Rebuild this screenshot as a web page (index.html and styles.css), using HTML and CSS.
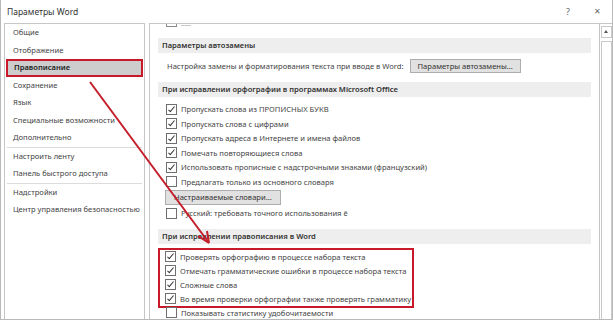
FILE: index.html
```html
<!DOCTYPE html>
<html lang="ru">
<head>
    <meta charset="UTF-8">
    <title>Параметры Word</title>
    <link rel="stylesheet" href="styles.css">
</head>
<body>
<div class="window">
    <div class="titlebar">
        <span class="title">Параметры Word</span>
        <span class="title-btns"><span class="help">?</span><span class="close">✕</span></span>
    </div>

    <div class="main">
        <!-- left menu -->
        <ul class="nav">
            <li>Общие</li>
            <li>Отображение</li>
            <li class="active">Правописание</li>
            <li>Сохранение</li>
            <li>Язык</li>
            <li>Специальные возможности</li>
            <li>Дополнительно</li>
            <li class="sep"></li>
            <li>Настроить ленту</li>
            <li>Панель быстрого доступа</li>
            <li class="sep"></li>
            <li>Надстройки</li>
            <li>Центр управления безопасностью</li>
        </ul>

        <!-- options pane -->
        <div class="pane">
            <div class="content">
                <!-- bottom edge of the option scrolled out of view -->
                <div class="partial"><span class="partial-box"></span><span class="partial-text"></span></div>

                <div class="section first">Параметры автозамены</div>
                <div class="row autocorrect">
                    <span>Настройка замены и форматирования текста при вводе в Word:</span>
                    <span class="btn">Параметры автозамены...</span>
                </div>

                <div class="section">При исправлении орфографии в программах Microsoft Office</div>
                <div class="checks">
                    <div class="row"><span class="box checked"></span><span>Пропускать слова из ПРОПИСНЫХ БУКВ</span></div>
                    <div class="row"><span class="box checked"></span><span>Пропускать слова с цифрами</span></div>
                    <div class="row"><span class="box checked"></span><span>Пропускать адреса в Интернете и имена файлов</span></div>
                    <div class="row"><span class="box checked"></span><span>Помечать повторяющиеся слова</span></div>
                    <div class="row"><span class="box checked"></span><span>Использовать прописные с надстрочными знаками (французский)</span></div>
                    <div class="row"><span class="box"></span><span>Предлагать только из основного словаря</span></div>
                    <div class="btn-row"><span class="btn">Настраиваемые словари...</span></div>
                    <div class="row"><span class="box"></span><span>Русский: требовать точного использования ё</span></div>
                </div>

                <div class="section">При исправлении правописания в Word</div>
                <div class="highlight">
                    <div class="row"><span class="box checked"></span><span>Проверять орфографию в процессе набора текста</span></div>
                    <div class="row"><span class="box checked"></span><span>Отмечать грамматические ошибки в процессе набора текста</span></div>
                    <div class="row"><span class="box checked"></span><span>Сложные слова</span></div>
                    <div class="row"><span class="box checked"></span><span>Во время проверки орфографии также проверять грамматику</span></div>
                </div>
                <div class="row last"><span class="box"></span><span>Показывать статистику удобочитаемости</span></div>
            </div>
            <div class="scrollbar">
                <div class="arrow-up"></div>
                <div class="thumb"></div>
            </div>
        </div>
    </div>

    <!-- red pointer over the dialog -->
    <svg class="pointer" width="613" height="320" viewBox="0 0 613 320">
        <line x1="89" y1="82" x2="208" y2="243" stroke="#c41e2a" stroke-width="2"/>
        <path d="M208 243 L197 236 M208 243 L206 231" stroke="#c41e2a" stroke-width="2" fill="none"/>
    </svg>
</div>
</body>
</html>
```

FILE: styles.css
```css
/* Page */
body {
    margin: 0;
    background: #fff;
    font-family: "Noto Sans", "Open Sans", sans-serif;
    font-size: 7.6px;
    color: #444;
}

/* Dialog window */
.window {
    position: relative;
    width: 613px;
    height: 320px;
    box-sizing: border-box;
    border: 1px solid #b9b9b9;
    border-top: none;
    background: #fff;
    overflow: hidden;
}

/* Title bar */
.titlebar {
    height: 23px;
    display: flex;
    align-items: center;
    justify-content: space-between;
    padding: 0 11px 0 6px;
}

.title {
    color: #333;
    font-size: 8.5px;
}

.title-btns {
    display: flex;
    gap: 24px;
    color: #666;
    font-size: 9px;
}

.close {
    font-size: 8px;
}

/* Main area */
.main {
    display: flex;
    gap: 4px;
    height: 296px;
    padding-left: 3px;
}

/* Left menu */
.nav {
    list-style: none;
    margin: 0;
    padding: 0;
    width: 141px;
    box-sizing: border-box;
    border: 1px solid #c6c6c6;
    border-bottom: none;
}

.nav li {
    height: 17.5px;
    line-height: 17.5px;
    padding-left: 8px;
    white-space: nowrap;
}

.nav li.sep {
    height: 1px;
    margin: 0 2px;
    background: #dcdcdc;
}

.nav li.active {
    margin: 0 1px;
    padding-left: 6px;
    height: 13.5px;
    line-height: 13.5px;
    background: #cdcdcd;
    border: 2px solid #c8192b;
    color: #222;
    font-weight: 600;
}

/* Options pane */
.pane {
    flex: 1;
    display: flex;
    border: 1px solid #c6c6c6;
    border-bottom: none;
    border-right: none;
    min-width: 0;
}

.content {
    flex: 1;
    padding: 0 8px 0 8px;
    border-right: 1px solid #c6c6c6;
    overflow: hidden;
}

/* Scrolled-off option */
.partial {
    display: flex;
    align-items: flex-start;
    gap: 4px;
    height: 3px;
    padding-left: 8px;
}

.partial-box {
    width: 9px;
    height: 2px;
    border: 1px solid #8a8a8a;
    border-top: none;
}

.partial-text {
    width: 10px;
    height: 1px;
    margin-top: 1px;
    background: #c8c8c8;
}

.row {
    display: flex;
    align-items: center;
    height: 14.5px;
    padding-left: 8px;
    gap: 4px;
    white-space: nowrap;
}

/* Checkbox */
.box {
    width: 9px;
    height: 9px;
    flex: none;
    border: 1px solid #6f6f6f;
    background: #fff;
    position: relative;
}

.box.checked::after {
    content: "";
    position: absolute;
    left: 3px;
    top: 0;
    width: 2px;
    height: 6px;
    border: solid #333;
    border-width: 0 1.5px 1.5px 0;
    transform: rotate(40deg);
}

/* Section headers */
.section {
    height: 15px;
    line-height: 15px;
    padding-left: 4px;
    margin-top: 8px;
    background: #eeeeee;
    color: #333;
    font-weight: 600;
    white-space: nowrap;
}

.section.first {
    margin-top: 11px;
}

.autocorrect {
    height: 17px;
    margin-top: 4px;
    gap: 6px;
    padding-left: 9px;
}

/* Buttons */
.btn {
    display: inline-block;
    height: 12px;
    line-height: 12px;
    padding: 0 7px;
    background: #e1e1e1;
    border: 1px solid #adadad;
    color: #333;
}

.checks {
    margin-top: 5px;
}

.btn-row {
    height: 17px;
    display: flex;
    align-items: center;
    padding-left: 7px;
}

.btn-row .btn {
    height: 13px;
    line-height: 13px;
    padding: 0 8px;
}

/* Highlighted group */
.highlight {
    margin-top: 4px;
    width: 252px;
    border: 2px solid #c8192b;
}

.highlight .row {
    height: 14px;
    padding-left: 5px;
}

.row.last {
    margin-top: -2px;
    height: 14px;
}

/* Scrollbar */
.scrollbar {
    width: 12px;
    display: flex;
    flex-direction: column;
    align-items: center;
    padding-top: 2px;
    gap: 3px;
}

.arrow-up {
    width: 9px;
    height: 10px;
    border: 1px solid #c9c9c9;
    position: relative;
}

.arrow-up::after {
    content: "";
    position: absolute;
    left: 2px;
    top: 3px;
    border: 2.5px solid transparent;
    border-bottom: 3px solid #555;
    border-top: none;
}

.thumb {
    flex: 1;
    width: 9px;
    border: 1px solid #c9c9c9;
    border-bottom: none;
}

/* Pointer arrow */
.pointer {
    position: absolute;
    left: 0;
    top: 0;
    pointer-events: none;
}
```
